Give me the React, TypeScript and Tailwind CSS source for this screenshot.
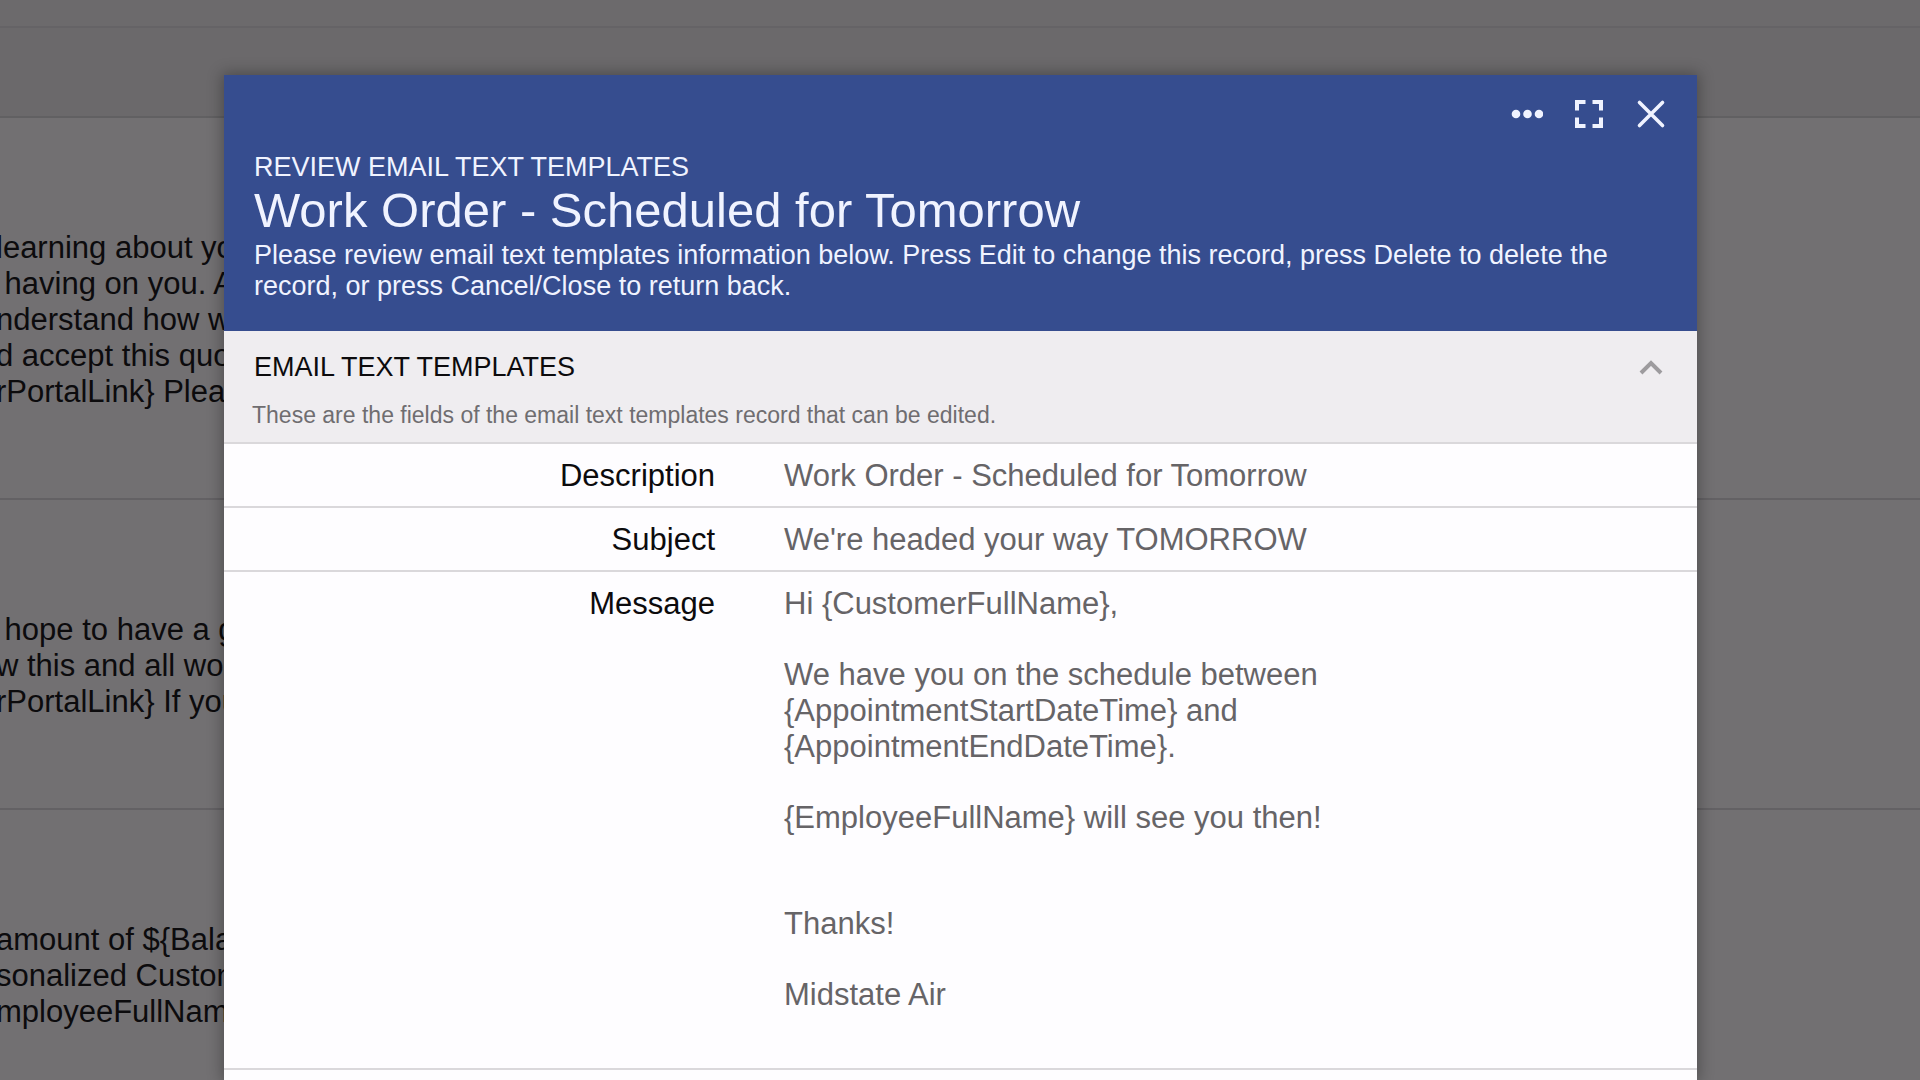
import { useState } from "react"

const backgroundRows = [
  {
    className: "h-[382px]",
    lines: ["learning about yo", " having on you. A", "nderstand how w", "d accept this quo", "rPortalLink} Pleas"],
  },
  {
    className: "h-[310px]",
    lines: [" hope to have a g", "w this and all wor", "rPortalLink} If you"],
  },
  {
    className: "h-[380px]",
    lines: ["amount of ${Bala", "sonalized Custom", "mployeeFullNam"],
  },
]

const messageParagraphs = [
  "Hi {CustomerFullName},",
  "We have you on the schedule between {AppointmentStartDateTime} and {AppointmentEndDateTime}.",
  "{EmployeeFullName} will see you then!",
]

function TemplateList() {
  return (
    <main className="text-[31px] leading-9 text-[#0c0b0d]">
      <div className="h-7 border-b-2 border-[#656366] bg-[#6c6a6c]" />
      <div className="h-[90px] border-b-2 border-[#616062] bg-[#6b696b]" />
      {backgroundRows.map((row) => (
        <div key={row.lines[0]} className={`border-b-2 border-[#636164] pt-28 ${row.className}`}>
          {row.lines.map((line) => (
            <p key={line} className="-ml-1 whitespace-pre">
              {line}
            </p>
          ))}
        </div>
      ))}
    </main>
  )
}

function DialogHeader() {
  return (
    <header className="bg-[#364d8f] px-[30px] pb-[29px] text-[#f0f3ff]">
      <div className="flex h-[77px] items-center justify-end gap-[30px]">
        <button type="button" aria-label="More options">
          <svg width="32" height="32" viewBox="0 0 32 32" fill="currentColor">
            <circle cx="5" cy="16" r="4.3" />
            <circle cx="16.5" cy="16" r="4.3" />
            <circle cx="28" cy="16" r="4.3" />
          </svg>
        </button>
        <button type="button" aria-label="Full screen">
          <svg width="32" height="32" viewBox="0 0 32 32" fill="none" stroke="currentColor" strokeWidth="4">
            <path d="M4 12.5V4H12.5M19.5 4H28V12.5M28 19.5V28H19.5M12.5 28H4V19.5" />
          </svg>
        </button>
        <button type="button" aria-label="Close">
          <svg width="32" height="32" viewBox="0 0 32 32" fill="none" stroke="currentColor" strokeWidth="3.6" strokeLinecap="round">
            <path d="M4.5 4.5L27.5 27.5M27.5 4.5L4.5 27.5" />
          </svg>
        </button>
      </div>
      <p className="text-[27px] leading-[31px]">REVIEW EMAIL TEXT TEMPLATES</p>
      <h1 className="pb-0.5 text-[49px] leading-[55px]">Work Order - Scheduled for Tomorrow</h1>
      <p className="text-[27px] leading-[31px]">
        Please review email text templates information below. Press Edit to change this record, press Delete to delete
        the record, or press Cancel/Close to return back.
      </p>
    </header>
  )
}

function Field({ label, children }: { label: string; children: React.ReactNode }) {
  return (
    <div className="flex border-b-2 border-[#dad8db] pt-[14px] pb-3 text-[31px] leading-9">
      <dt className="w-1/3 text-right text-[#0c0b0d]">{label}</dt>
      <dd className="ml-[69px] w-1/2 text-[#666467]">{children}</dd>
    </div>
  )
}

export default function App() {
  const [expanded, setExpanded] = useState(true)

  return (
    <div className="relative h-screen overflow-hidden bg-[#727072] font-['Liberation_Sans',Arial,sans-serif]">
      <TemplateList />

      {/* Review dialog */}
      <div className="absolute inset-0 overflow-hidden pt-[75px] pr-[223px] pl-56">
        <div
          role="dialog"
          aria-label="Review email text templates"
          className="min-h-full bg-[#fefdff] shadow-[0_0_14px_2px_rgba(0,0,0,0.3)]"
        >
          <DialogHeader />

          <section>
            <div className="border-b-2 border-[#dad8db] bg-[#efedf0] px-7 pt-5 pb-[13px]">
              <div className="flex items-center justify-between pl-0.5">
                <h2 className="text-[27px] leading-8 text-[#0c0b0d]">EMAIL TEXT TEMPLATES</h2>
                <button type="button" aria-label="Toggle section" onClick={() => setExpanded(!expanded)}>
                  <svg width="36" height="32" viewBox="0 0 36 32" fill="none" stroke="#9d9b9e" strokeWidth="4">
                    <path d="M8 22L18 12L28 22" />
                  </svg>
                </button>
              </div>
              <p className="pt-[18px] text-[23px] leading-7 text-[#6f6d70]">
                These are the fields of the email text templates record that can be edited.
              </p>
            </div>

            {expanded && (
              <dl>
                <Field label="Description">Work Order - Scheduled for Tomorrow</Field>
                <Field label="Subject">We're headed your way TOMORROW</Field>
                <Field label="Message">
                  <div className="flex flex-col gap-[35px] pb-[43px]">
                    {messageParagraphs.map((paragraph) => (
                      <p key={paragraph}>{paragraph}</p>
                    ))}
                    <p className="pt-[35px]">Thanks!</p>
                    <p>Midstate Air</p>
                  </div>
                </Field>
              </dl>
            )}
          </section>
        </div>
      </div>
    </div>
  )
}
